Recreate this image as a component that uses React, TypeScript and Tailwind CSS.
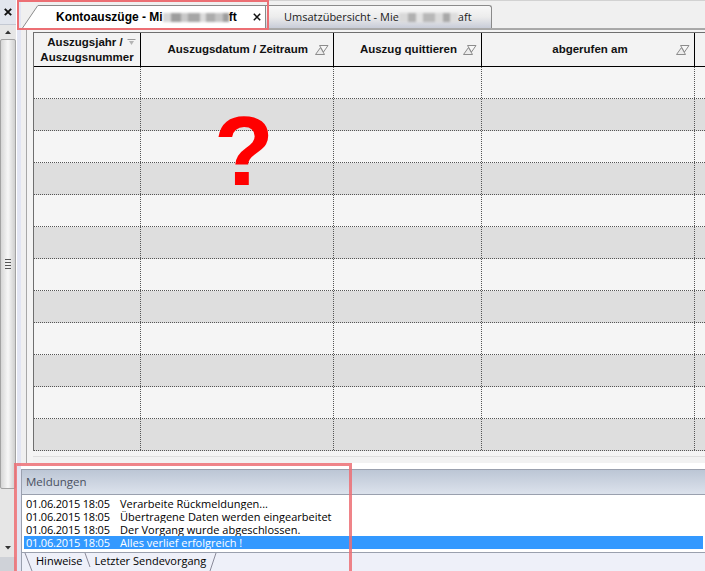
import React from 'react';

const ROWS = Array.from({ length: 12 }, (_, i) => i);

function SortIcon() {
    return (
        <svg width="15" height="12" viewBox="0 0 15 12" className="shrink-0">
            <path d="M1.5 10.5 L10.5 10.5 L6.5 3.5 Z" fill="#ececec" stroke="#8c8c8c" />
            <path d="M5.5 1.5 L14 1.5 L9.5 8 Z" fill="#f7f7f7" stroke="#8c8c8c" />
        </svg>
    );
}

function SmallSortIcon() {
    return (
        <svg width="9" height="8" viewBox="0 0 9 8" className="shrink-0">
            <path d="M0.5 1.5 L8.5 1.5" stroke="#9a9a9a" />
            <path d="M2 3 L7 3 L4.5 7 Z" fill="#b4b4b4" />
        </svg>
    );
}

function CloseX({ size, stroke }: { size: number; stroke: number }) {
    return (
        <svg width={size} height={size} viewBox="0 0 8 8" className="shrink-0">
            <path d="M0.8 0.8 L7.2 7.2 M7.2 0.8 L0.8 7.2" stroke="#111" strokeWidth={stroke} />
        </svg>
    );
}

// the blurred-out part of the account name
function Smudge({ blocks }: { blocks: [number, string][] }) {
    return (
        <span className="inline-flex h-[9px] items-stretch blur-[0.8px]">
            {blocks.map(([w, c], i) => (
                <span key={i} style={{ width: w, background: c }} />
            ))}
        </span>
    );
}

function SideBar() {
    return (
        <div className="flex w-[16px] flex-col bg-[#c6c9cf]">
            <div className="flex h-[25px] items-center justify-center border-b border-[#c4c9d3] bg-[#e2e6ee]">
                <CloseX size={8} stroke={1.9} />
            </div>
            <div className="flex flex-1 flex-col items-stretch bg-[#e6e6e6] pb-[2px]">
                <div className="flex h-[14px] items-center justify-center">
                    <svg width="6" height="4" viewBox="0 0 6 4">
                        <path d="M0 4 L3 0.5 L6 4 Z" fill="#333" />
                    </svg>
                </div>
                <div className="flex h-[450px] flex-col items-center justify-center rounded-[2px] border border-[#a3a3a3] bg-linear-to-r from-[#d6d6d6] via-[#f7f7f7] to-[#cfcfcf]">
                    <div className="flex flex-col gap-[2px]">
                        <div className="h-px w-[6px] bg-[#555]" />
                        <div className="h-px w-[6px] bg-[#555]" />
                        <div className="h-px w-[6px] bg-[#555]" />
                        <div className="h-px w-[6px] bg-[#555]" />
                    </div>
                </div>
                <div className="flex-1" />
                <div className="flex h-[14px] items-center justify-center">
                    <svg width="6" height="4" viewBox="0 0 6 4">
                        <path d="M0 0 L6 0 L3 3.5 Z" fill="#333" />
                    </svg>
                </div>
            </div>
            <div className="h-[14px] bg-[#cfd2d8]" />
        </div>
    );
}

function TabRow() {
    return (
        <div className="flex h-[29px] items-end border-b border-t border-[#a9a9a9] border-t-[#d2d2d2] pl-[1px] text-[12px]">
            {/* active tab */}
            <div className="flex h-[23px]">
                <svg width="16" height="23" viewBox="0 0 16 23" className="shrink-0">
                    <path d="M0 23 L16 0 L16 23 Z" fill="#fff" />
                    <path d="M0.5 23 L15.8 0.5" stroke="#8a8a8a" />
                </svg>
                <div className="flex w-[228px] items-center border-r border-t border-[#8a8a8a] bg-white pl-[18px] pr-[4px]">
                    <span className="font-bold">Kontoauszüge - Mi</span>
                    <Smudge blocks={[[8, '#d6d6d6'], [10, '#9d9d9d'], [7, '#c9c9c9'], [12, '#a6a6a6'], [6, '#dcdcdc'], [9, '#acacac'], [8, '#c4c4c4'], [6, '#9e9e9e']]} />
                    <span className="font-bold">ft</span>
                    <span className="ml-auto">
                        <CloseX size={8} stroke={1.5} />
                    </span>
                </div>
            </div>
            {/* inactive tab */}
            <div className="flex h-[23px] w-[226px] items-center rounded-tr-[3px] border-r border-t border-[#8a8a8a] bg-linear-to-b from-[#f8f8f8] via-[#ececec] to-[#c8ccd8] pl-[18px] font-['Open_Sans',sans-serif] text-[11px] text-[#1a1a1a]">
                <span>Umsatzübersicht - Mie</span>
                <Smudge blocks={[[9, '#d9d9d9'], [8, '#b0b0b0'], [7, '#e2e2e2'], [12, '#b8b8b8'], [8, '#dadada'], [7, '#a8a8a8'], [8, '#dddddd']]} />
                <span>aft</span>
            </div>
        </div>
    );
}

function StatementTable() {
    return (
        <div className="flex h-[434px] flex-col pl-[5px]">
            <div className="flex flex-1 flex-col border-l border-t border-[#a7a7a7] bg-[#f4f4f4] pl-[6px] pt-[2px]">
                <div className="border-l border-t border-[#6f6f6f] text-[11.5px] font-bold leading-[15px] text-[#111]">
                    {/* header */}
                    <div className="grid h-[34px] grid-cols-[107px_193px_148px_213px_1fr] border-b border-black bg-[#f3f3f3]">
                        <div className="flex flex-col items-center justify-center border-r border-black">
                            <div className="flex items-center gap-[4px] pl-[9px]">
                                <span>Auszugsjahr /</span>
                                <SmallSortIcon />
                            </div>
                            <span>Auszugsnummer</span>
                        </div>
                        <div className="flex items-center justify-end gap-[6px] border-r border-black pr-[4px]">
                            <span>Auszugsdatum / Zeitraum</span>
                            <SortIcon />
                        </div>
                        <div className="flex items-center justify-end gap-[5px] border-r border-black pr-[4px]">
                            <span>Auszug quittieren</span>
                            <SortIcon />
                        </div>
                        <div className="flex items-center border-r border-black pr-[4px]">
                            <span className="w-[15px]" />
                            <span className="flex-1 pl-[8px] text-center">abgerufen am</span>
                            <SortIcon />
                        </div>
                        <div />
                    </div>
                    {/* body */}
                    {ROWS.map((i) => (
                        <div
                            key={i}
                            className={`grid h-[32px] grid-cols-[107px_193px_148px_213px_1fr] border-b border-dotted border-[#555] ${i % 2 ? 'bg-[#dedede]' : 'bg-[#f5f5f5]'}`}
                        >
                            <div className="border-r border-dotted border-[#555]" />
                            <div className="border-r border-dotted border-[#555]" />
                            <div className="border-r border-dotted border-[#555]" />
                            <div className="border-r border-dotted border-[#555]" />
                            <div />
                        </div>
                    ))}
                </div>
                <div className="h-[5px]" />
                <div className="flex-1 border-t border-[#dedede] bg-[#f2f2f2]" />
            </div>
        </div>
    );
}

const messages = [
    'Verarbeite Rückmeldungen...',
    'Übertragene Daten werden eingearbeitet',
    'Der Vorgang wurde abgeschlossen.',
    'Alles verlief erfolgreich !',
];

function MessagesPanel() {
    return (
        <div className="flex h-[102px] flex-col border-l border-t border-[#9aa0ae] bg-[#eef0f9] font-['Open_Sans',sans-serif]">
            <div className="flex h-[25px] items-center border-b border-[#9aa0ae] bg-linear-to-b from-[#bcc6d5] to-[#dce2ec] pl-[4px] text-[11.5px] text-[#4a5161]">
                Meldungen
            </div>
            <div className="h-[58px] overflow-hidden border-b border-[#9aa0ae] bg-white px-[2px] pt-[2px] text-[11px] leading-[13px]">
                {messages.map((m, i) => (
                    <div
                        key={m}
                        className={`flex h-[13px] items-center overflow-hidden pl-[2px] ${i === 3 ? 'bg-[#3399ff] text-white' : 'text-black'}`}
                    >
                        <span className="w-[94px] shrink-0 tracking-[-0.2px]">01.06.2015 18:05</span>
                        <span>{m}</span>
                    </div>
                ))}
            </div>
            <div className="flex flex-1 items-start pl-[2px] text-[11px] leading-[16px] text-black">
                <svg width="9" height="18" viewBox="0 0 9 18" className="shrink-0">
                    <path d="M1 0 L8 18" stroke="#8a8a9a" />
                </svg>
                <span className="pl-[3px] pr-[1px]">Hinweise</span>
                <svg width="8" height="18" viewBox="0 0 8 18" className="shrink-0">
                    <path d="M1 0 L6 14" stroke="#8a8a9a" />
                </svg>
                <span className="pl-[3px] pr-[3px]">Letzter Sendevorgang</span>
                <svg width="8" height="18" viewBox="0 0 8 18" className="shrink-0">
                    <path d="M7 0 L1 18" stroke="#8a8a9a" />
                </svg>
            </div>
        </div>
    );
}

export default function App() {
    return (
        <div className="relative flex h-[571px] w-[705px] overflow-hidden bg-[#f0f0f0] font-['Liberation_Sans',Arial,sans-serif] text-black">
            <SideBar />
            <div className="w-[5px] border-l border-white bg-[#e2e5f3]" />
            <div className="flex min-w-0 flex-1 flex-col">
                <TabRow />
                <StatementTable />
                <div className="h-[6px] bg-white" />
                <MessagesPanel />
            </div>

            {/* annotation overlays */}
            <span className="pointer-events-none absolute left-[214px] top-[102px] text-[98px] font-bold leading-none text-[#ff0000]">
                ?
            </span>
            <div className="pointer-events-none absolute left-[17px] top-0 h-[30px] w-[252px] border-2 border-[#ec6f74]" />
            <div className="pointer-events-none absolute left-[14px] top-[463px] h-[120px] w-[338px] border-[3px] border-[#ec6f74]/85" />
        </div>
    );
}
